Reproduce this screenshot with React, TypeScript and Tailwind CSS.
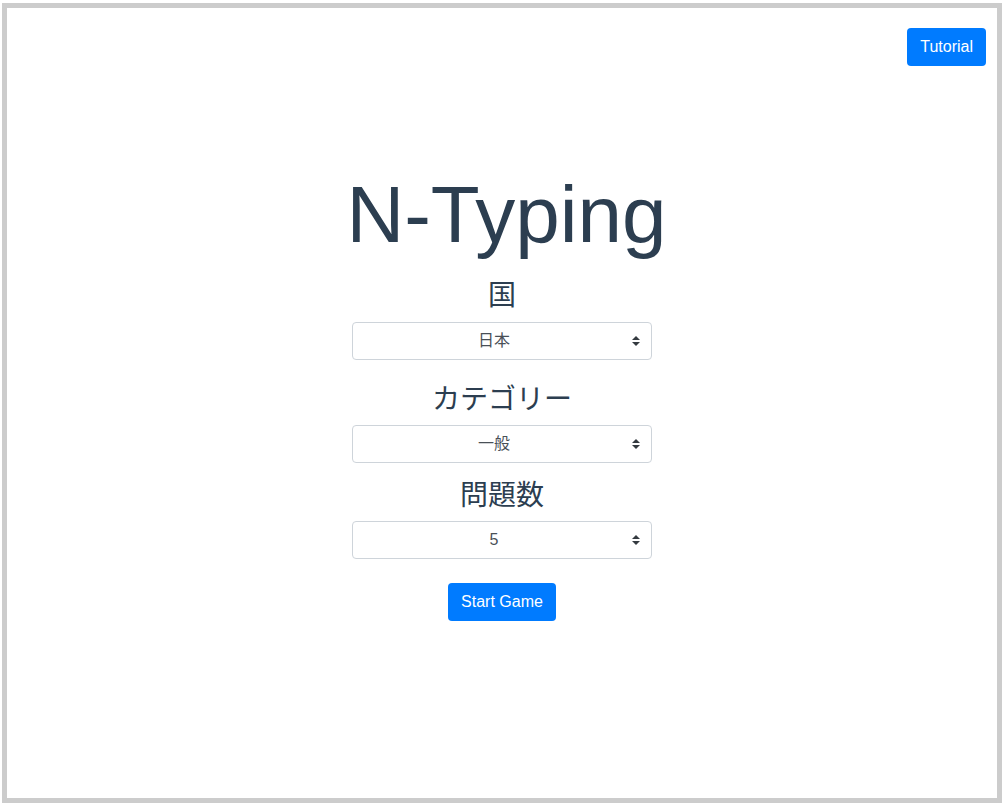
import React from "react";

const FONT = '"Liberation Sans", Arial, "Noto Sans CJK JP", sans-serif';

function Arrow() {
  return (
    <svg
      className="pointer-events-none absolute right-[12px] top-1/2 -translate-y-1/2"
      width="8"
      height="10"
      viewBox="0 0 4 5"
    >
      <path d="M2 0L0 2h4zm0 5L0 3h4z" fill="#343a40" />
    </svg>
  );
}

function Select({ value, options }: { value: string; options: string[] }) {
  return (
    <div className="relative w-[300px] h-[38px]">
      <select
        defaultValue={value}
        className="w-full h-full appearance-none bg-white border border-[#ced4da] rounded-[4px] pl-[12px] pr-[28px] text-[16px] text-[#495057] text-center [text-align-last:center] outline-none"
        style={{ fontFamily: FONT }}
      >
        {options.map((o) => (
          <option key={o} value={o}>
            {o}
          </option>
        ))}
      </select>
      <Arrow />
    </div>
  );
}

export default function App() {
  return (
    <div className="bg-white w-[1002px] h-[803px] pt-[3px] pl-[2px]" style={{ fontFamily: FONT }}>
      <div className="w-[1000px] h-[800px] border-[5px] border-[#cccccc] flex flex-col items-center text-[#2c3e50]">
        <div className="w-full flex justify-end pt-[20px] pr-[11px]">
          <button className="h-[38px] px-[13px] bg-[#007bff] text-white text-[16px] rounded-[4px] leading-[1.5]">
            Tutorial
          </button>
        </div>
        <h1 className="mt-[101px] ml-[9px] text-[80px] leading-[1.2] font-normal">N-Typing</h1>
        <h3 className="mt-[16px] text-[28px] leading-[1.2] font-normal">国</h3>
        <div className="mt-[9px]">
          <Select value="日本" options={["日本"]} />
        </div>
        <h3 className="mt-[23px] text-[28px] leading-[1.2] font-normal">カテゴリー</h3>
        <div className="mt-[9px]">
          <Select value="一般" options={["一般"]} />
        </div>
        <h3 className="mt-[16px] text-[28px] leading-[1.2] font-normal">問題数</h3>
        <div className="mt-[8px]">
          <Select value="5" options={["5", "10", "15"]} />
        </div>
        <button className="mt-[24px] h-[38px] px-[13px] bg-[#007bff] text-white text-[16px] rounded-[4px] leading-[1.5]">
          Start Game
        </button>
      </div>
    </div>
  );
}
